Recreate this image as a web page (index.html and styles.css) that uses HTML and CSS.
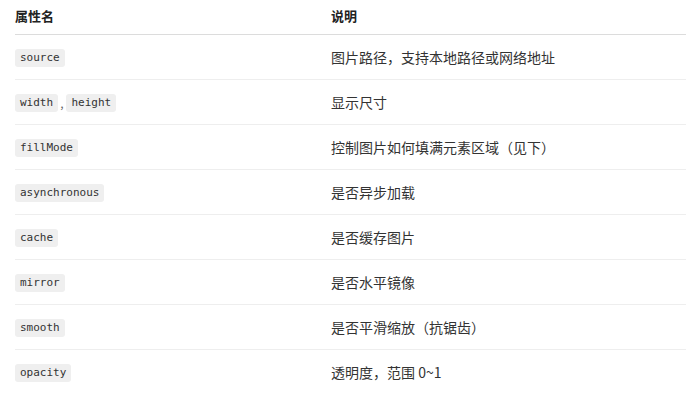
FILE: index.html
```html
<!DOCTYPE html>
<html lang="zh">
<head>
<meta charset="utf-8">
<link rel="stylesheet" href="styles.css">
</head>
<body>
<table class="props">
  <thead>
    <tr><th class="c1">属性名</th><th class="c2">说明</th></tr>
  </thead>
  <tbody>
    <tr><td><code>source</code></td><td>图片路径，支持本地路径或网络地址</td></tr>
    <tr><td><code>width</code><span class="sep">,</span><code>height</code></td><td>显示尺寸</td></tr>
    <tr><td><code>fillMode</code></td><td>控制图片如何填满元素区域（见下）</td></tr>
    <tr><td><code>asynchronous</code></td><td>是否异步加载</td></tr>
    <tr><td><code>cache</code></td><td>是否缓存图片</td></tr>
    <tr><td><code>mirror</code></td><td>是否水平镜像</td></tr>
    <tr><td><code>smooth</code></td><td>是否平滑缩放（抗锯齿）</td></tr>
    <tr><td><code>opacity</code></td><td>透明度，范围 0~1</td></tr>
  </tbody>
</table>
</body>
</html>
```
FILE: styles.css
```css
html, body {
  margin: 0;
  padding: 0;
  background: #fff;
}
body {
  padding-left: 15px;
  font-family: "Noto Sans CJK SC", "Noto Sans", sans-serif;
  color: #333;
}
.props {
  width: 671px;
  border-collapse: collapse;
  table-layout: fixed;
}
.props th {
  text-align: left;
  font-size: 13px;
  font-weight: 700;
  color: #222;
  line-height: 18px;
  height: 34px;
  padding: 0 0 1px;
  box-sizing: border-box;
  border-bottom: 1px solid #dcdcdc;
  vertical-align: middle;
}
.props .c1 { width: 316px; }
.props td {
  font-size: 14px;
  line-height: 18px;
  height: 45px;
  padding: 0;
  box-sizing: border-box;
  border-bottom: 1px solid #eeeeee;
  vertical-align: middle;
}
.props tbody tr:last-child td {
  border-bottom: none;
}
.props code {
  display: inline-block;
  font-family: "DejaVu Sans Mono", "Liberation Mono", monospace;
  font-size: 11px;
  line-height: 18px;
  padding: 0 5px;
  background: #efefef;
  border-radius: 3px;
  color: #333;
  vertical-align: middle;
}
.sep {
  font-size: 12px;
  color: #666;
  margin: 0 3px 0 2px;
  vertical-align: middle;
}
```
